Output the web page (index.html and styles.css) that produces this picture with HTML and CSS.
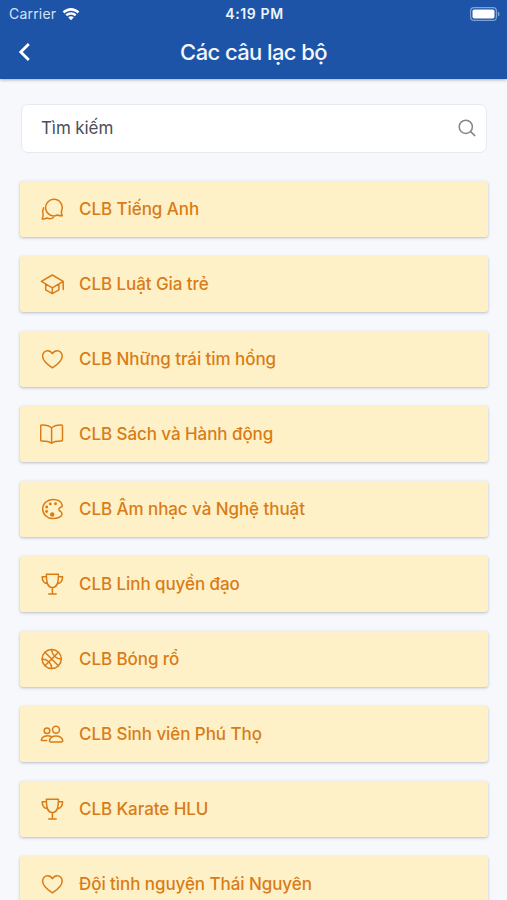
FILE: index.html
```
<!DOCTYPE html>
<html lang="vi">
<head>
<meta charset="utf-8">
<meta name="viewport" content="width=device-width, initial-scale=1">
<title>Các câu lạc bộ</title>
<link rel="stylesheet" href="styles.css">
</head>
<body>
<svg class="sprite" aria-hidden="true">
  <symbol id="chat" viewBox="0 0 24 24"><path d="M22.300 18.800c-2.300.1-3.500-.2-4.700-.8A8.300 8.300 0 1 1 21.600 13.700c-.5 1.700-.1 3.300.7 5.100Z"/><path d="M3.600 10.800c-1.400 2.600-1.200 4.800-.5 6.600.3 1.400-.2 3-.9 4.600 2 .2 3.400-.2 4.700-1 2.200 1 4.500.9 6.500-.3"/></symbol>
  <symbol id="cap" viewBox="0 0 24 24"><path d="M12.300 3 1.400 9.400l10.900 6.400 10.900-6.400ZM5.700 12.200v5.700l6.600 3.700 6.600-3.700v-5.700M12.300 15.800v5.600M23.200 9.400v8"/></symbol>
  <symbol id="heart" viewBox="0 0 24 24"><path d="M12.400 20.800C9 18.600 2.600 14.200 2.600 8.900c0-3 2.300-5.200 4.900-5.200 2.200 0 3.900 1.100 4.900 3 1-1.900 2.700-3 4.900-3 2.600 0 4.900 2.200 4.900 5.200 0 5.300-6.400 9.700-9.800 11.900Z"/></symbol>
  <symbol id="book" viewBox="0 0 24 24"><path d="M11.600 6.100C9.700 3.800 6.400 2.900 1.700 3c-.6 0-1 .4-1 1v14c0 .6.400 1 1 1 4.800 0 7.700.3 9.900 2.300 2.200-2 5.100-2.300 9.900-2.300.6 0 1-.4 1-1V4c0-.6-.4-1-1-1-4.700-.1-8 .8-9.900 3.100Zm0 0v15"/></symbol>
  <symbol id="palette" viewBox="0 0 24 24"><path d="M20.700 14.500c-1.900-1.200-2.500-2.500-1-3.600 1.500-1 2.700-.8 2.600-2.500C22 4.600 17.500 2.300 13 2.400 7 2.500 2.700 6.700 2.700 12s4.300 9.600 10 9.600c4.500 0 8.700-1.600 9.200-4 .3-1.500-.2-2.400-1.200-3.100Z"/><g class="dots"><circle cx="6.600" cy="14.500" r="1.450"/><circle cx="6.700" cy="10" r="1.450"/><circle cx="10.300" cy="6.900" r="1.450"/><circle cx="15.500" cy="6.800" r="1.450"/><circle cx="12.200" cy="17.500" r="2.200"/></g></symbol>
  <symbol id="trophy" viewBox="0 0 24 24"><path d="M6.400 2.200h12c0 8.500-1 12.800-6 13.500-5-.7-6-5-6-13.500ZM12.400 15.700v6.400M8.700 22.100h7.500M6.400 4.800H2.200c0 3.800 1.600 6.500 5.400 7M18.400 4.800h4.200c0 3.800-1.600 6.500-5.400 7"/></symbol>
  <symbol id="ball" viewBox="0 0 24 24"><circle cx="11.700" cy="12" r="9.600"/><path d="m5 5.300 13.400 13.400M18.400 5.300 5 18.700M11.700 2.400c0 5.300 4.300 9.600 9.600 9.600M2.100 12c5.300 0 9.600 4.300 9.600 9.600"/></symbol>
  <symbol id="people" viewBox="0 0 24 24"><circle cx="16" cy="7.800" r="3.500"/><circle cx="7" cy="8.700" r="2.800"/><path d="M16 13.900c-3.200 0-5.800 1.600-6.500 4.400-.2.900.2 1.600 1 1.600h11.200c.8 0 1.200-.7 1-1.600-.8-2.800-3.400-4.400-6.700-4.400ZM10.800 14.200c-4.500-1.200-8.600.2-9.400 3.200-.2.700.1 1.100.8 1.100h4.500"/></symbol>
</svg>
<header class="header">
  <div class="status">
    <div class="carrier"><span>Carrier</span>
      <svg class="wifi" viewBox="0 0 18 14"><path d="M.7 4.500C5.500-.2 12.500-.2 17.300 4.500L15.600 6.400C11.700 2.700 6.300 2.700 2.400 6.400ZM3.500 7.500c3.200-3 7.800-3 11 0l-1.700 1.800c-2.200-2-5.400-2-7.600 0ZM6.200 10.300c1.600-1.500 4-1.500 5.600 0L9 13.300Z"/></svg>
    </div>
    <div class="time">4:19 PM</div>
    <svg class="battery" viewBox="0 0 30 14"><rect class="shell" x=".6" y=".6" width="25.800" height="12.800" rx="3.500"/><rect x="2.500" y="2.500" width="22" height="9" rx="1.800"/><path class="tip" d="M27.800 4.500c2.300 1 2.300 4 0 5Z"/></svg>
  </div>
  <div class="bar">
    <svg class="back" viewBox="0 0 14 20"><path d="M10.800 2 2.800 10l8 8"/></svg>
    <h1 class="title">Các câu lạc bộ</h1>
  </div>
</header>
<main class="content">
  <div class="search"><span>Tìm kiếm</span>
    <svg class="magnifier" viewBox="0 0 18 18"><circle cx="7.800" cy="7.800" r="6.600"/><path d="m12.600 12.600 4.200 4"/></svg>
  </div>
  <ul class="clubs">
    <li class="club"><svg class="icon"><use href="#chat"/></svg><span>CLB Tiếng Anh</span></li>
    <li class="club"><svg class="icon"><use href="#cap"/></svg><span>CLB Luật Gia trẻ</span></li>
    <li class="club"><svg class="icon"><use href="#heart"/></svg><span>CLB Những trái tim hồng</span></li>
    <li class="club"><svg class="icon"><use href="#book"/></svg><span>CLB Sách và Hành động</span></li>
    <li class="club"><svg class="icon"><use href="#palette"/></svg><span>CLB Âm nhạc và Nghệ thuật</span></li>
    <li class="club"><svg class="icon"><use href="#trophy"/></svg><span>CLB Linh quyền đạo</span></li>
    <li class="club"><svg class="icon"><use href="#ball"/></svg><span>CLB Bóng rổ</span></li>
    <li class="club"><svg class="icon"><use href="#people"/></svg><span>CLB Sinh viên Phú Thọ</span></li>
    <li class="club"><svg class="icon"><use href="#trophy"/></svg><span>CLB Karate HLU</span></li>
    <li class="club"><svg class="icon"><use href="#heart"/></svg><span>Đội tình nguyện Thái Nguyên</span></li>
  </ul>
</main>
</body>
</html>
```
FILE: styles.css
```
* { box-sizing: border-box; }
html, body { height: 100%; }
body {
  margin: 0;
  height: 900px;
  overflow: hidden;
  background: #f6f8fc;
  font-family: Inter, "Noto Sans", sans-serif;
  display: flex;
  flex-direction: column;
}
.sprite { display: none; }
.header {
  flex: none;
  height: 79px;
  background: #1d54a8;
  color: #fff;
  box-shadow: 0 1px 3px rgba(0, 0, 0, .3);
}
.status {
  display: grid;
  grid-template-columns: 1fr auto 1fr;
  align-items: center;
  height: 27px;
  padding: 0 7px 0 9px;
}
.carrier {
  display: flex;
  align-items: center;
  gap: 6px;
  font-size: 14px;
  letter-spacing: .2px;
  color: #d5e2f5;
}
.wifi { width: 18px; height: 14px; fill: #fff; }
.time { font-size: 14px; font-weight: 600; letter-spacing: .6px; color: #eef4fc; }
.battery { width: 30px; height: 14px; justify-self: end; fill: #fff; }
.battery .shell { fill: none; stroke: #7ea2d8; stroke-width: 1.200; }
.battery .tip { fill: #7ea2d8; }
.bar {
  display: grid;
  grid-template-columns: 60px 1fr 60px;
  align-items: center;
  height: 50px;
}
.back { width: 14px; height: 20px; margin-left: 18px; fill: none; stroke: #fff; stroke-width: 2.800; }
.title {
  margin: 0;
  text-align: center;
  font-size: 22px;
  line-height: 28px;
  font-weight: 500;
  letter-spacing: -.6px;
  color: #f3f7fd;
}
.content { padding: 25px 19px 0 20px; }
.search {
  display: flex;
  align-items: center;
  justify-content: space-between;
  height: 49px;
  margin: 0 1px 0 1px;
  padding: 0 10px 1px 19px;
  background: #fff;
  border: 1px solid #e6e9ef;
  border-radius: 7px;
  font-size: 17px;
  letter-spacing: -.1px;
  color: #4a4f59;
}
.magnifier { width: 18px; height: 18px; fill: none; stroke: #85878b; stroke-width: 1.500; stroke-linecap: round; }
.clubs {
  list-style: none;
  margin: 28px 0 0;
  padding: 0;
  display: flex;
  flex-direction: column;
  gap: 19px;
}
.club {
  display: flex;
  align-items: center;
  gap: 15px;
  height: 56px;
  padding-left: 20px;
  background: #fef1c7;
  border-radius: 3px;
  box-shadow: 0 1px 3px rgba(50, 50, 80, .3);
  color: #d97c17;
  font-size: 17px;
  font-weight: 500;
  letter-spacing: -.07px;
  white-space: nowrap;
}
.icon {
  width: 24px;
  height: 24px;
  fill: none;
  stroke: #d97c17;
  stroke-width: 1.500;
  stroke-linecap: round;
  stroke-linejoin: round;
}
.dots { fill: #d97c17; stroke: none; }
```
